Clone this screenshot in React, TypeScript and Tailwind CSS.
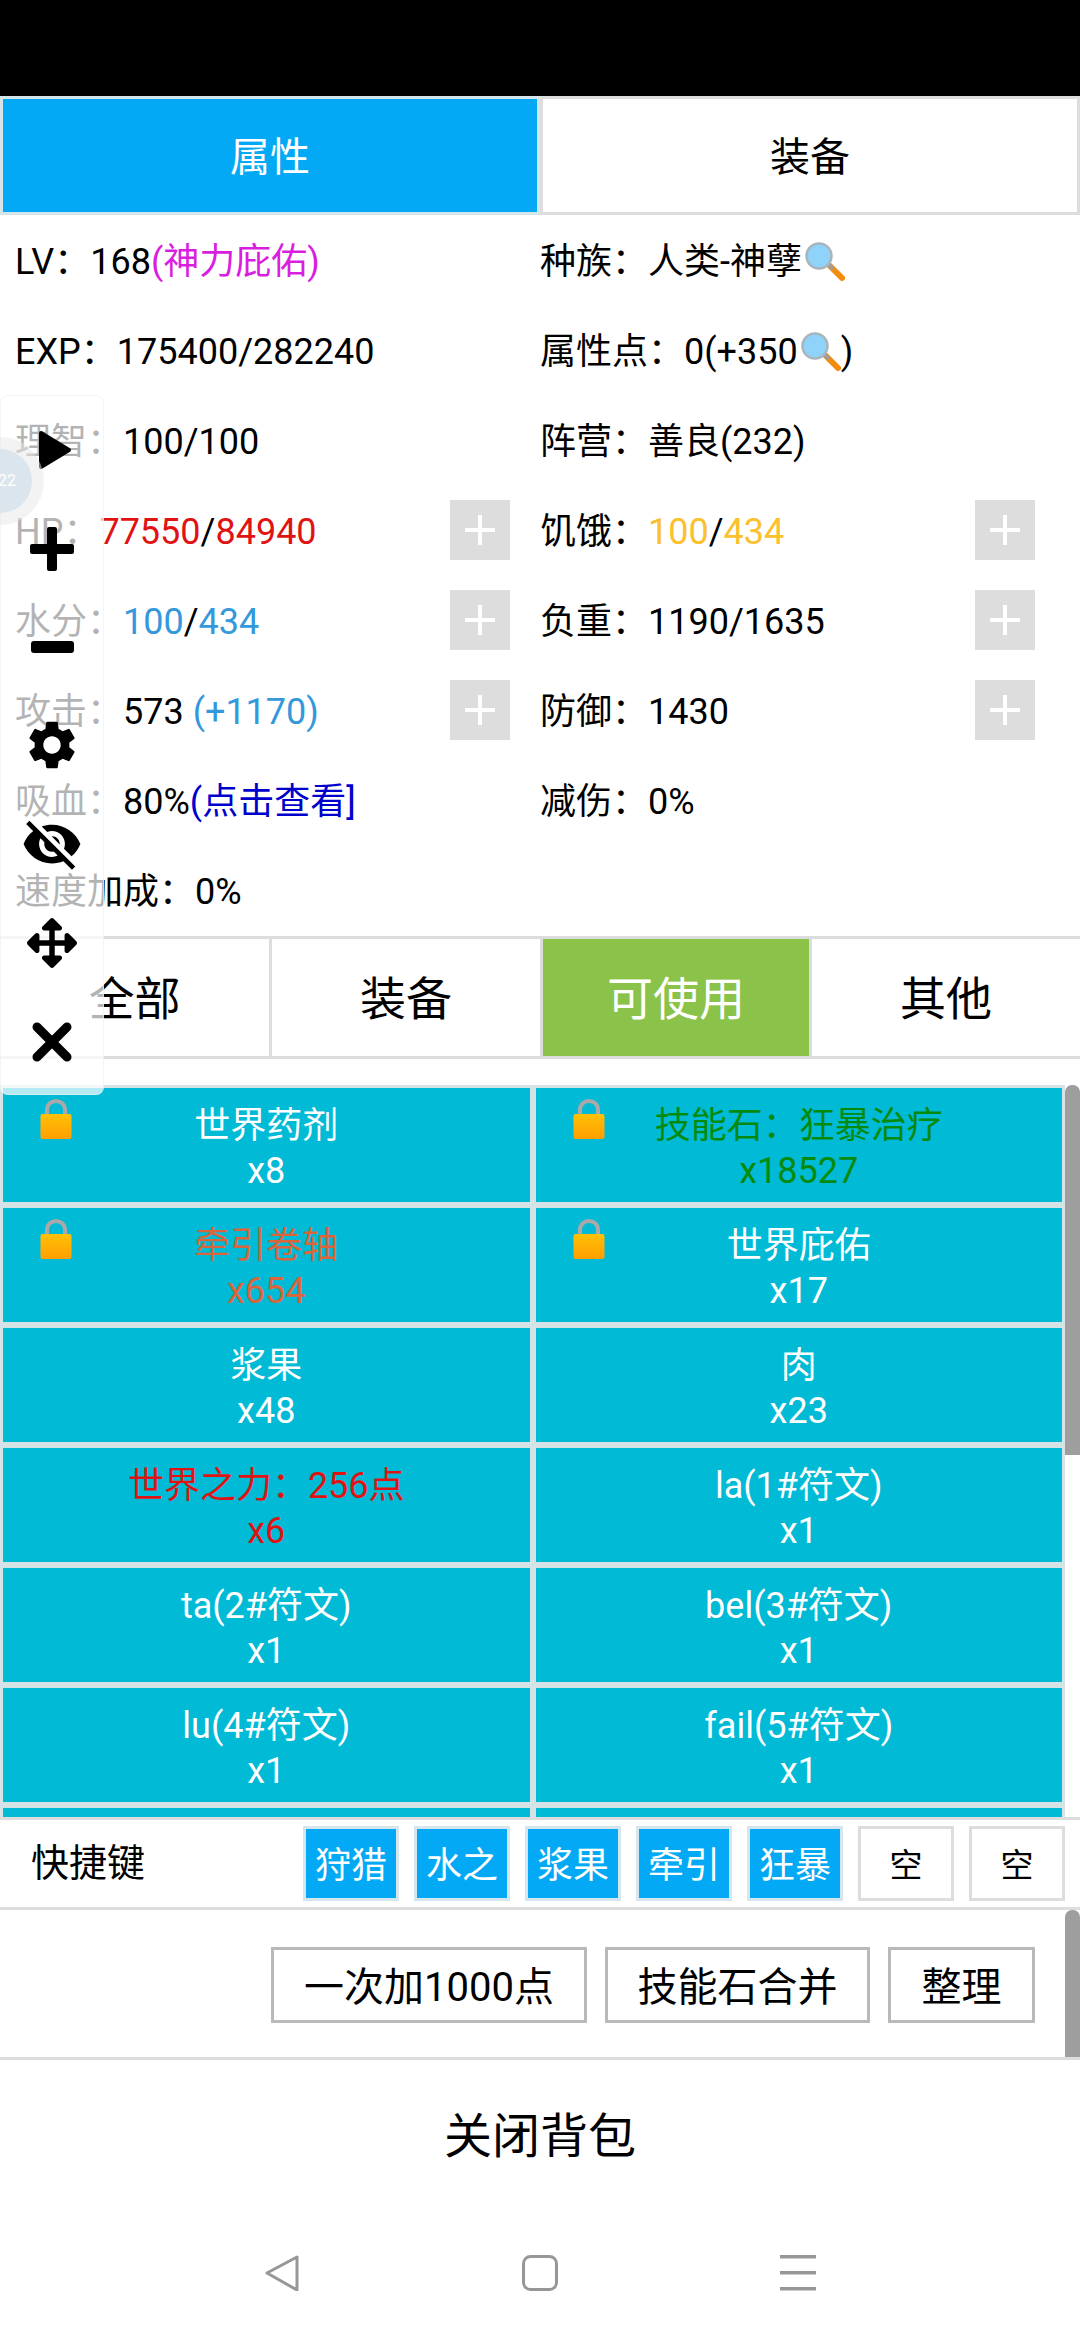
import type { ReactNode } from "react";
import { MdSettings, MdVisibilityOff } from "react-icons/md";
import { FaArrowsAlt } from "react-icons/fa";

const red = "text-[#e01313]";
const blue = "text-[#3498db]";
const amber = "text-[#fbc02d]";

function Magnifier() {
  return (
    <svg viewBox="0 0 40 40" className="inline-block w-[40px] h-[40px] ml-[3px] align-[-8px]">
      <path d="M24 23 L37 36" stroke="#f28c0f" strokeWidth="6" strokeLinecap="round" />
      <path d="M23 22 L28 27" stroke="#9e9e9e" strokeWidth="4" />
      <circle cx="14" cy="14" r="12.5" fill="#8fd3fb" stroke="#a9b4bb" strokeWidth="2.5" />
    </svg>
  );
}

function Lock() {
  return (
    <svg viewBox="0 0 32 40" className="absolute top-[11px] left-[37px] w-[32px] h-[40px]">
      <defs>
        <linearGradient id="lockBody" x1="0" y1="0" x2="0" y2="1">
          <stop offset="0" stopColor="#ffc107" />
          <stop offset="1" stopColor="#ff9e00" />
        </linearGradient>
      </defs>
      <path d="M7 18 V11 C7 -1 25 -1 25 11 V18" fill="none" stroke="#a9a9a9" strokeWidth="4" />
      <rect x="0.5" y="15" width="31" height="25" rx="2" fill="url(#lockBody)" />
    </svg>
  );
}

function PlusButton() {
  return (
    <div className="w-[60px] h-[60px] bg-[#dddddd] flex items-center justify-center shrink-0">
      <svg viewBox="0 0 30 30" className="w-[30px] h-[30px]">
        <path d="M13 0h4v13h13v4H17v13h-4V17H0v-4h13z" fill="#ffffff" />
      </svg>
    </div>
  );
}

function StatRow({ children, plus, right }: { children: ReactNode; plus?: boolean; right?: boolean }) {
  return (
    <div className={`h-[90px] flex items-center justify-between whitespace-nowrap ${right ? "pr-[45px]" : "pl-[15px] pr-[30px]"}`}>
      <div className="pt-[3px]">{children}</div>
      {plus && <PlusButton />}
    </div>
  );
}

const items = [
  { name: "世界药剂", count: "x8", lock: true },
  { name: "技能石：狂暴治疗", count: "x18527", lock: true, color: "text-[#068a0e]" },
  { name: "牵引卷轴", count: "x654", lock: true, color: "text-[#d9663a]" },
  { name: "世界庇佑", count: "x17", lock: true },
  { name: "浆果", count: "x48" },
  { name: "肉", count: "x23" },
  { name: "世界之力：256点", count: "x6", color: "text-[#e01313]" },
  { name: "la(1#符文)", count: "x1" },
  { name: "ta(2#符文)", count: "x1" },
  { name: "bel(3#符文)", count: "x1" },
  { name: "lu(4#符文)", count: "x1" },
  { name: "fail(5#符文)", count: "x1" },
  { name: "", count: "" },
  { name: "", count: "" },
];

const shortcuts = ["狩猎", "水之", "浆果", "牵引", "狂暴", "空", "空"];

export default function App() {
  return (
    <div className="relative w-[1080px] h-[2340px] overflow-hidden bg-white text-black text-[36px] font-['Roboto','Noto_Sans_CJK_SC',sans-serif]">
      <div className="h-[96px] bg-black" />

      {/* main tabs */}
      <div className="grid grid-cols-2 h-[119px] text-[40px]">
        <div className="bg-[#03a9f4] border-[3px] border-[#d4e6ec] text-white flex items-center justify-center pt-[5px]">属性</div>
        <div className="border-[3px] border-[#dddddd] flex items-center justify-center pt-[5px]">装备</div>
      </div>

      {/* stats */}
      <div className="grid grid-cols-2">
        <StatRow>LV：168<span className="text-[#d81fe0]">(神力庇佑)</span></StatRow>
        <StatRow right>种族：人类-神孽<Magnifier /></StatRow>
        <StatRow>EXP：175400/282240</StatRow>
        <StatRow right>属性点：0(+350<Magnifier />)</StatRow>
        <StatRow>理智：100/100</StatRow>
        <StatRow right>阵营：善良(232)</StatRow>
        <StatRow plus>HP：<span className={red}>77550</span>/<span className={red}>84940</span></StatRow>
        <StatRow right plus>饥饿：<span className={amber}>100</span>/<span className={amber}>434</span></StatRow>
        <StatRow plus>水分：<span className={blue}>100</span>/<span className={blue}>434</span></StatRow>
        <StatRow right plus>负重：1190/1635</StatRow>
        <StatRow plus>攻击：573 <span className={blue}>(+1170)</span></StatRow>
        <StatRow right plus>防御：1430</StatRow>
        <StatRow>吸血：80%<span className="text-[#0000cc]">(点击查看]</span></StatRow>
        <StatRow right>减伤：0%</StatRow>
        <StatRow>速度加成：0%</StatRow>
        <div />
      </div>

      {/* filter tabs */}
      <div className="mt-[1px] grid grid-cols-[272px_271px_269px_1fr] h-[123px] border-y-[3px] border-[#dddddd] text-[46px]">
        <div className="flex items-center justify-center border-r-[3px] border-[#dddddd] pt-[4px]">全部</div>
        <div className="flex items-center justify-center border-r-[3px] border-[#dddddd] pt-[4px]">装备</div>
        <div className="flex items-center justify-center bg-[#8bc34a] text-white border-r-[3px] border-[#dddddd] pt-[4px]">可使用</div>
        <div className="flex items-center justify-center pt-[4px]">其他</div>
      </div>

      {/* item grid */}
      <div className="relative mt-[26px] h-[735px] border-b-[3px] border-[#dddddd] overflow-hidden">
        <div className="w-[1065px] grid grid-cols-2">
          {items.map((item, i) => (
            <div
              key={i}
              className={`relative h-[120px] border-[3px] border-[#d5e3e7] bg-[#00bad6] flex flex-col items-center justify-center pt-[8px] leading-[45px] ${item.color ?? "text-white"}`}
            >
              {item.lock && <Lock />}
              <div>{item.name}</div>
              <div>{item.count}</div>
            </div>
          ))}
        </div>
        <div className="absolute right-0 top-0 w-[15px] h-[370px] bg-[#9e9e9e] rounded-t-[7px]" />
      </div>

      {/* shortcuts */}
      <div className="h-[90px] border-b-[3px] border-[#dddddd] flex items-center justify-between pl-[31px] pr-[15px]">
        <div className="text-[38px]">快捷键</div>
        <div className="flex gap-[15px]">
          {shortcuts.map((s, i) => (
            <div
              key={i}
              className={`w-[96px] h-[75px] border-[3px] flex items-center justify-center pt-[5px] ${
                s === "空" ? "border-[#dddddd] text-[33px]" : "border-[#d5e6ee] bg-[#03a9f4] text-white text-[36px]"
              }`}
            >
              {s}
            </div>
          ))}
        </div>
      </div>

      {/* actions */}
      <div className="relative h-[150px] border-b-[3px] border-[#dddddd] flex items-start justify-end gap-[18px] pt-[37px] pr-[45px] text-[40px]">
        <div className="w-[316px] h-[76px] border-[3px] border-[#b9b9b9] flex items-center justify-center pt-[5px]">一次加1000点</div>
        <div className="w-[265px] h-[76px] border-[3px] border-[#b9b9b9] flex items-center justify-center pt-[5px]">技能石合并</div>
        <div className="w-[147px] h-[76px] border-[3px] border-[#b9b9b9] flex items-center justify-center pt-[5px]">整理</div>
        <div className="absolute right-0 top-0 w-[15px] h-[147px] bg-[#9e9e9e] rounded-t-[7px]" />
      </div>

      {/* close */}
      <div className="h-[148px] flex items-center justify-center text-[48px] pt-[6px]">关闭背包</div>

      {/* system nav */}
      <div className="flex items-start justify-center gap-[222px] pt-[47px]">
        <svg viewBox="0 0 36 36" className="w-[36px] h-[36px]" fill="none" stroke="#979797" strokeWidth="3" strokeLinejoin="round">
          <path d="M33 2 L3 18 L33 35 Z" />
        </svg>
        <svg viewBox="0 0 36 36" className="w-[36px] h-[36px]" fill="none" stroke="#979797" strokeWidth="3">
          <rect x="1.5" y="1.5" width="33" height="33" rx="7" />
        </svg>
        <svg viewBox="0 0 36 36" className="w-[36px] h-[36px]" fill="#979797">
          <rect x="0" y="0" width="36" height="3.5" />
          <rect x="0" y="16" width="36" height="3.5" />
          <rect x="0" y="32" width="36" height="3.5" />
        </svg>
      </div>

      {/* floating toolbar and assistant ball */}
      <div className="absolute left-0 top-[395px] w-[104px] h-[700px] rounded-[8px] bg-white/70 border border-[#eeeeee]/60 flex flex-col items-center pt-[4px]">
        <div className="h-[99px] flex items-center justify-center">
          <svg viewBox="0 0 34 40" className="w-[34px] h-[40px] ml-[6px]">
            <path d="M3 3 L31 20 L3 37 Z" fill="#000" stroke="#000" strokeWidth="4" strokeLinejoin="round" />
          </svg>
        </div>
        <div className="h-[99px] flex items-center justify-center">
          <svg viewBox="0 0 44 44" className="w-[44px] h-[44px]">
            <path d="M17 2a2 2 0 0 1 2-2h6a2 2 0 0 1 2 2v15h15a2 2 0 0 1 2 2v6a2 2 0 0 1-2 2H27v15a2 2 0 0 1-2 2h-6a2 2 0 0 1-2-2V27H2a2 2 0 0 1-2-2v-6a2 2 0 0 1 2-2h15z" fill="#000" />
          </svg>
        </div>
        <div className="h-[98px] flex items-center justify-center">
          <div className="w-[43px] h-[12px] rounded-[3px] bg-black" />
        </div>
        <div className="h-[98px] flex items-center justify-center"><MdSettings size={58} color="#000" /></div>
        <div className="h-[99px] flex items-center justify-center"><MdVisibilityOff size={62} color="#000" /></div>
        <div className="h-[100px] flex items-center justify-center"><FaArrowsAlt size={50} color="#000" /></div>
        <div className="h-[97px] flex items-center justify-center">
          <svg viewBox="0 0 40 40" className="w-[40px] h-[40px]">
            <path d="M5 5 L35 35 M35 5 L5 35" stroke="#000" strokeWidth="9" strokeLinecap="round" />
          </svg>
        </div>
      </div>
      <div className="absolute left-[-44px] top-[437px] w-[88px] h-[88px] rounded-full bg-[#e8e8e8]/50 flex items-center justify-center">
        <div className="w-[64px] h-[64px] rounded-full bg-[#d5e1ec]/80 flex items-center justify-end pr-[16px] text-white text-[16px]">22</div>
      </div>
    </div>
  );
}
